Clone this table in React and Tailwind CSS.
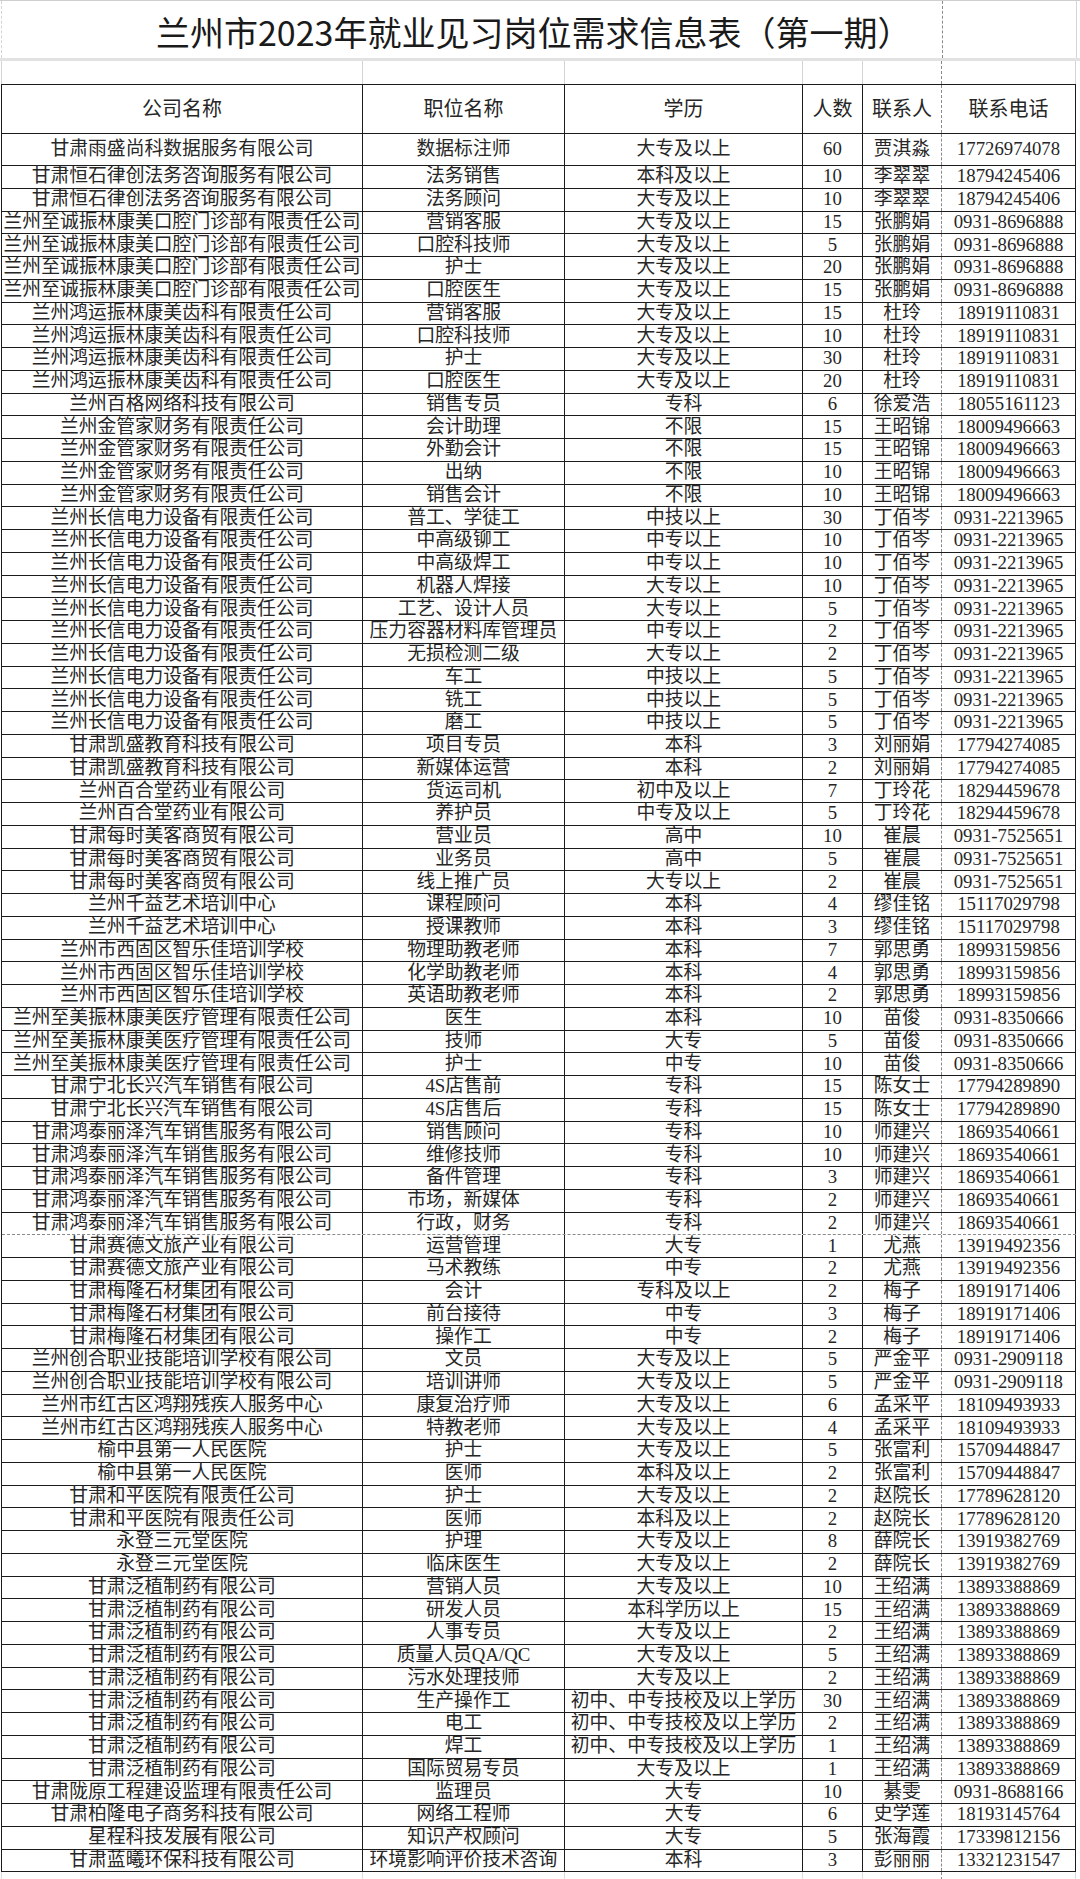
import React from "react";

// 公司, 联系人, 电话, [职位, 学历, 人数]
const groups = [
  ["甘肃雨盛尚科数据服务有限公司", "贾淇淼", "17726974078", [["数据标注师", "大专及以上", "60"]]],
  ["甘肃恒石律创法务咨询服务有限公司", "李翠翠", "18794245406", [["法务销售", "本科及以上", "10"], ["法务顾问", "大专及以上", "10"]]],
  ["兰州至诚振林康美口腔门诊部有限责任公司", "张鹏娟", "0931-8696888", [["营销客服", "大专及以上", "15"], ["口腔科技师", "大专及以上", "5"], ["护士", "大专及以上", "20"], ["口腔医生", "大专及以上", "15"]]],
  ["兰州鸿运振林康美齿科有限责任公司", "杜玲", "18919110831", [["营销客服", "大专及以上", "15"], ["口腔科技师", "大专及以上", "10"], ["护士", "大专及以上", "30"], ["口腔医生", "大专及以上", "20"]]],
  ["兰州百格网络科技有限公司", "徐爱浩", "18055161123", [["销售专员", "专科", "6"]]],
  ["兰州金管家财务有限责任公司", "王昭锦", "18009496663", [["会计助理", "不限", "15"], ["外勤会计", "不限", "15"], ["出纳", "不限", "10"], ["销售会计", "不限", "10"]]],
  ["兰州长信电力设备有限责任公司", "丁佰岑", "0931-2213965", [["普工、学徒工", "中技以上", "30"], ["中高级铆工", "中专以上", "10"], ["中高级焊工", "中专以上", "10"], ["机器人焊接", "大专以上", "10"], ["工艺、设计人员", "大专以上", "5"], ["压力容器材料库管理员", "中专以上", "2"], ["无损检测二级", "大专以上", "2"], ["车工", "中技以上", "5"], ["铣工", "中技以上", "5"], ["磨工", "中技以上", "5"]]],
  ["甘肃凯盛教育科技有限公司", "刘丽娟", "17794274085", [["项目专员", "本科", "3"], ["新媒体运营", "本科", "2"]]],
  ["兰州百合堂药业有限公司", "丁玲花", "18294459678", [["货运司机", "初中及以上", "7"], ["养护员", "中专及以上", "5"]]],
  ["甘肃每时美客商贸有限公司", "崔晨", "0931-7525651", [["营业员", "高中", "10"], ["业务员", "高中", "5"], ["线上推广员", "大专以上", "2"]]],
  ["兰州千益艺术培训中心", "缪佳铭", "15117029798", [["课程顾问", "本科", "4"], ["授课教师", "本科", "3"]]],
  ["兰州市西固区智乐佳培训学校", "郭思勇", "18993159856", [["物理助教老师", "本科", "7"], ["化学助教老师", "本科", "4"], ["英语助教老师", "本科", "2"]]],
  ["兰州至美振林康美医疗管理有限责任公司", "苗俊", "0931-8350666", [["医生", "本科", "10"], ["技师", "大专", "5"], ["护士", "中专", "10"]]],
  ["甘肃宁北长兴汽车销售有限公司", "陈女士", "17794289890", [["4S店售前", "专科", "15"], ["4S店售后", "专科", "15"]]],
  ["甘肃鸿泰丽泽汽车销售服务有限公司", "师建兴", "18693540661", [["销售顾问", "专科", "10"], ["维修技师", "专科", "10"], ["备件管理", "专科", "3"], ["市场，新媒体", "专科", "2"], ["行政，财务", "专科", "2"]]],
  ["甘肃赛德文旅产业有限公司", "尤燕", "13919492356", [["运营管理", "大专", "1"], ["马术教练", "中专", "2"]]],
  ["甘肃梅隆石材集团有限公司", "梅子", "18919171406", [["会计", "专科及以上", "2"], ["前台接待", "中专", "3"], ["操作工", "中专", "2"]]],
  ["兰州创合职业技能培训学校有限公司", "严金平", "0931-2909118", [["文员", "大专及以上", "5"], ["培训讲师", "大专及以上", "5"]]],
  ["兰州市红古区鸿翔残疾人服务中心", "孟采平", "18109493933", [["康复治疗师", "大专及以上", "6"], ["特教老师", "大专及以上", "4"]]],
  ["榆中县第一人民医院", "张富利", "15709448847", [["护士", "大专及以上", "5"], ["医师", "本科及以上", "2"]]],
  ["甘肃和平医院有限责任公司", "赵院长", "17789628120", [["护士", "大专及以上", "2"], ["医师", "本科及以上", "2"]]],
  ["永登三元堂医院", "薛院长", "13919382769", [["护理", "大专及以上", "8"], ["临床医生", "大专及以上", "2"]]],
  ["甘肃泛植制药有限公司", "王绍满", "13893388869", [["营销人员", "大专及以上", "10"], ["研发人员", "本科学历以上", "15"], ["人事专员", "大专及以上", "2"], ["质量人员QA/QC", "大专及以上", "5"], ["污水处理技师", "大专及以上", "2"], ["生产操作工", "初中、中专技校及以上学历", "30"], ["电工", "初中、中专技校及以上学历", "2"], ["焊工", "初中、中专技校及以上学历", "1"], ["国际贸易专员", "大专及以上", "1"]]],
  ["甘肃陇原工程建设监理有限责任公司", "綦雯", "0931-8688166", [["监理员", "大专", "10"]]],
  ["甘肃柏隆电子商务科技有限公司", "史学莲", "18193145764", [["网络工程师", "大专", "6"]]],
  ["星程科技发展有限公司", "张海霞", "17339812156", [["知识产权顾问", "大专", "5"]]],
  ["甘肃蓝曦环保科技有限公司", "彭丽丽", "13321231547", [["环境影响评价技术咨询", "本科", "3"]]],
];

const rows = [];
groups.forEach(([company, contact, phone, jobs]) => {
  jobs.forEach(([job, edu, num]) => rows.push({ company, job, edu, num, contact, phone }));
});

const cell = "flex items-center justify-center whitespace-nowrap overflow-visible";

const Row = ({ r, first, dashed }) => (
  <div
    className={`flex ${first ? "h-[32px]" : "h-[22.75px]"} ${
      dashed ? "border-b border-dashed border-[#8a8a8a]" : "border-b border-[#1c1c1c]"
    }`}
  >
    <div className={`${cell} w-[361px] border-r border-[#1c1c1c]`}>{r.company}</div>
    <div className={`${cell} w-[202px] border-r border-[#1c1c1c]`}>{r.job}</div>
    <div className={`${cell} w-[238px] border-r border-[#1c1c1c]`}>{r.edu}</div>
    <div className={`${cell} w-[60px] border-r border-[#1c1c1c]`}>{r.num}</div>
    <div className={`${cell} w-[79px] border-r border-dashed border-[#8a8a8a]`}>{r.contact}</div>
    <div className={`${cell} w-[134px] border-r border-[#1c1c1c]`}>{r.phone}</div>
  </div>
);

export default function App() {
  return (
    <div className="w-[1080px] h-[1879px] bg-white overflow-hidden text-[#262626] font-['Liberation_Serif','Noto_Sans_CJK_SC',serif]">
      {/* 标题 */}
      <div className="flex h-[61px] border-t border-[#cfcfcf] border-b-[3px] border-b-[#e2e2e2]">
        <div className="w-[942px] ml-[1px] border-l border-[#d4d4d4] border-r border-dashed border-r-[#8a8a8a] flex items-center pl-[154px] pt-[5px]">
          <span className="font-['Noto_Sans_CJK_SC',sans-serif] text-[34px] text-[#1a1a1a] leading-none whitespace-nowrap">
            兰州市2023年就业见习岗位需求信息表（第一期）
          </span>
        </div>
        <div className="w-[134px] border-r border-[#d4d4d4]" />
      </div>

      {/* 空行 */}
      <div className="flex h-[23px] ml-[1px]">
        <div className="w-[362px] border-l border-r border-[#d4d4d4]" />
        <div className="w-[202px] border-r border-[#d4d4d4]" />
        <div className="w-[238px] border-r border-[#d4d4d4]" />
        <div className="w-[60px] border-r border-[#d4d4d4]" />
        <div className="w-[79px] border-r border-dashed border-[#8a8a8a]" />
        <div className="w-[134px] border-r border-[#d4d4d4]" />
      </div>

      <div className="ml-[1px] w-[1075px] border-l border-[#1c1c1c] text-[18.8px] leading-none">
        {/* 表头 */}
        <div className="flex h-[50px] border-t border-b border-[#1c1c1c] text-[20px]">
          <div className={`${cell} w-[361px] border-r border-[#1c1c1c]`}>公司名称</div>
          <div className={`${cell} w-[202px] border-r border-[#1c1c1c]`}>职位名称</div>
          <div className={`${cell} w-[238px] border-r border-[#1c1c1c]`}>学历</div>
          <div className={`${cell} w-[60px] border-r border-[#1c1c1c]`}>人数</div>
          <div className={`${cell} w-[79px] border-r border-dashed border-[#8a8a8a]`}>联系人</div>
          <div className={`${cell} w-[134px] border-r border-[#1c1c1c]`}>联系电话</div>
        </div>

        {rows.map((r, i) => (
          <Row key={i} r={r} first={i === 0} dashed={i === 47} />
        ))}
      </div>

      {/* 表格下方空白网格 */}
      <div className="flex h-[8px] ml-[1px]">
        <div className="w-[362px] border-l border-r border-[#dcdcdc]" />
        <div className="w-[202px] border-r border-[#dcdcdc]" />
        <div className="w-[238px] border-r border-[#dcdcdc]" />
        <div className="w-[60px] border-r border-[#dcdcdc]" />
        <div className="w-[79px] border-r border-dashed border-[#8a8a8a]" />
        <div className="w-[134px] border-r border-[#dcdcdc]" />
      </div>
    </div>
  );
}
